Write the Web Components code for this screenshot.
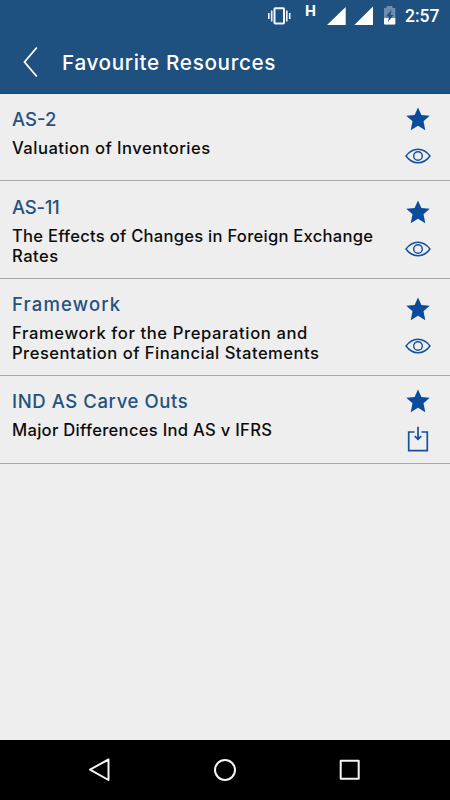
<!DOCTYPE html>
<html lang="en">
<head>
<meta charset="utf-8">
<title>Favourite Resources</title>
<style>
  body {
    margin: 0;
    background: #eee;
  }
</style>
</head>
<body>
<favourites-screen></favourites-screen>

<script>
// The action icons share a 16px high slot, the taller one overflows it.
const icons = {
  star: `<svg width="24" height="24" viewBox="0 0 24 24"><path fill="#0a4c9b" d="M12 .4l3.400 7.500 8.300.8-6.200 5.600 1.800 9L12 18.700 4.700 23.300l1.800-9L.3 8.700l8.300-.8z"/></svg>`,
  view: `<svg width="26" height="16" viewBox="0 0 26 16" fill="none" stroke="#14509c" stroke-width="1.4"><path d="M1 8Q6 1.200 13 1.200T25 8Q20 14.800 13 14.800T1 8z"/><circle cx="13" cy="8" r="4.300"/></svg>`,
  download: `<svg width="22" height="16" viewBox="0 3.500 22 16" fill="none" stroke="#14509c" stroke-width="1.7"><path d="M7.500 5.500H1.700v18.700h18.600V5.500h-5.800M11 .3v12.500M7.800 9.600l3.200 3.200 3.200-3.200"/></svg>`
};

class StatusBar extends HTMLElement {
  constructor() {
    super();
    this.attachShadow({mode: 'open'});
    this.shadowRoot.innerHTML = `
      <style>
        :host {
          display: flex;
          justify-content: flex-end;
          height: 32px;
          padding-right: 11px;
          box-sizing: border-box;
          color: #fff;
        }

        svg { display: block; }

        .network {
          font: 700 15.500px/23px Roboto, sans-serif;
          width: 11px;
        }

        time {
          font: 500 17.500px/32px Roboto, sans-serif;
          width: 34px;
          margin-left: 8px;
          white-space: nowrap;
        }
      </style>
      <svg width="38" height="32" viewBox="267 0 38 32" fill="none" stroke="#f4f8fc" stroke-width="1.6">
        <rect x="274.500" y="8.300" width="9.500" height="15.200" rx=".8" stroke-width="2"/>
        <path d="M271.700 10.500v11M268.800 13v6M286.800 10.500v11M289.700 13v6"/>
      </svg>
      <span class="network">H</span>
      <svg width="81" height="32" viewBox="316 0 81 32">
        <path d="M345.700 7v18H327zM373 6.500v18.500h-18.700z" fill="#fff"/>
        <path d="M384 8h2.500V6h6v2h2.800v15.500q0 1-1 1h-9.300q-1 0-1-1z" fill="#6d8eae"/>
        <path d="M384 18h11.300v5.500q0 1-1 1h-9.300q-1 0-1-1z" fill="#fff"/>
        <path d="M391.500 9.500l-5.500 7h3l-1 5.500 5.500-7h-3z" fill="#1e5080"/>
      </svg>
      <time>2:57</time>
    `;
  }
}

customElements.define('status-bar', StatusBar);

class TitleBar extends HTMLElement {
  constructor() {
    super();
    this.attachShadow({mode: 'open'});
    this.shadowRoot.innerHTML = `
      <style>
        :host {
          display: flex;
          align-items: center;
          height: 62px;
          padding-left: 22px;
          box-sizing: border-box;
          color: #fff;
        }

        h1 {
          margin: 0 0 1px 22px;
          font-size: 20.700px;
          font-weight: 500;
          letter-spacing: .650px;
          white-space: nowrap;
        }

        svg { margin-bottom: 2px; }
      </style>
      <svg width="18" height="34" viewBox="0 0 18 34" fill="none" stroke="#fff" stroke-width="1.8"><path d="M14.800 2.500L2.500 17l12.300 14.500"/></svg>
      <h1><slot></slot></h1>
    `;
  }
}

customElements.define('title-bar', TitleBar);

class ResourceItem extends HTMLElement {
  #resource = null;

  constructor() {
    super();
    this.attachShadow({mode: 'open'});
  }

  set resource(value) {
    this.#resource = value;
    this.render();
  }

  get style() {
    return `
      <style>
        :host {
          display: flex;
          justify-content: space-between;
          padding: 13.200px 19px 12.200px 12px;
          border-bottom: 1px solid #aaa;
          min-height: 87.400px;
          box-sizing: border-box;
        }

        h2 {
          margin: 0 0 7px;
          font-size: 18.500px;
          font-weight: 500;
          line-height: 24px;
          color: #24527f;
        }

        p {
          margin: 0;
          font-size: 16.600px;
          font-weight: 500;
          line-height: 20px;
          color: #0c0c0c;
        }

        span {
          display: block;
          width: max-content;
          white-space: nowrap;
        }

        .actions {
          display: flex;
          flex-direction: column;
          align-items: center;
          justify-content: center;
          width: 26px;
          gap: 17px;
          padding-bottom: 4px;
        }

        svg {
          display: block;
          overflow: visible;
        }
      </style>
    `;
  }

  render() {
    const {code, lines, action} = this.#resource;
    const span = ([text, tracking]) => `<span style="letter-spacing: ${tracking}px">${text}</span>`;

    this.shadowRoot.innerHTML = `
      ${this.style}
      <div class="text">
        <h2>${span(code)}</h2>
        <p>${lines.map(span).join('')}</p>
      </div>
      <div class="actions">${icons.star}${icons[action]}</div>
    `;
  }
}

customElements.define('resource-item', ResourceItem);

class NavBar extends HTMLElement {
  constructor() {
    super();
    this.attachShadow({mode: 'open'});
    this.shadowRoot.innerHTML = `
      <style>
        :host {
          display: flex;
          justify-content: space-between;
          align-items: center;
          height: 60px;
          padding: 0 88px;
          box-sizing: border-box;
          background: #000;
        }

        svg {
          fill: none;
          stroke: #f5f5f5;
          stroke-width: 2;
          stroke-linejoin: round;
        }
      </style>
      <svg width="24" height="24" viewBox="0 0 24 24"><path d="M20.500 1.500v20.500L2 11.700z"/></svg>
      <svg width="24" height="24" viewBox="0 0 24 24"><circle cx="12" cy="12" r="10"/></svg>
      <svg width="24" height="24" viewBox="0 0 24 24"><rect x="2.700" y="2.700" width="18" height="18"/></svg>
    `;
  }
}

customElements.define('nav-bar', NavBar);

class FavouritesScreen extends HTMLElement {
  // Each line of text is paired with its letter spacing in px.
  #resources = [
    {code: ['AS-2', 0], lines: [['Valuation of Inventories', .48]], action: 'view'},
    {code: ['AS-11', -.3], lines: [['The Effects of Changes in Foreign Exchange', .25], ['Rates', .5]], action: 'view'},
    {code: ['Framework', 1.15], lines: [['Framework for the Preparation and', .61], ['Presentation of Financial Statements', .47]], action: 'view'},
    {code: ['IND AS Carve Outs', .59], lines: [['Major Differences Ind AS v IFRS', .29]], action: 'download'}
  ];

  constructor() {
    super();
    this.attachShadow({mode: 'open'});
  }

  connectedCallback() {
    this.shadowRoot.innerHTML = `
      <style>
        :host {
          display: flex;
          flex-direction: column;
          height: 800px;
          background: #eee;
          font-family: Inter, sans-serif;
        }

        header {
          height: 94px;
          box-sizing: border-box;
          border-bottom: 1px solid #1a4672;
          background: #1e5080;
        }

        main { flex: 1; }
      </style>
      <header>
        <status-bar></status-bar>
        <title-bar>Favourite Resources</title-bar>
      </header>
      <main></main>
      <nav-bar></nav-bar>
    `;

    const main = this.shadowRoot.querySelector('main');
    this.#resources.forEach(resource => {
      const item = document.createElement('resource-item');
      item.resource = resource;
      main.append(item);
    });
  }
}

customElements.define('favourites-screen', FavouritesScreen);
</script>
</body>
</html>
